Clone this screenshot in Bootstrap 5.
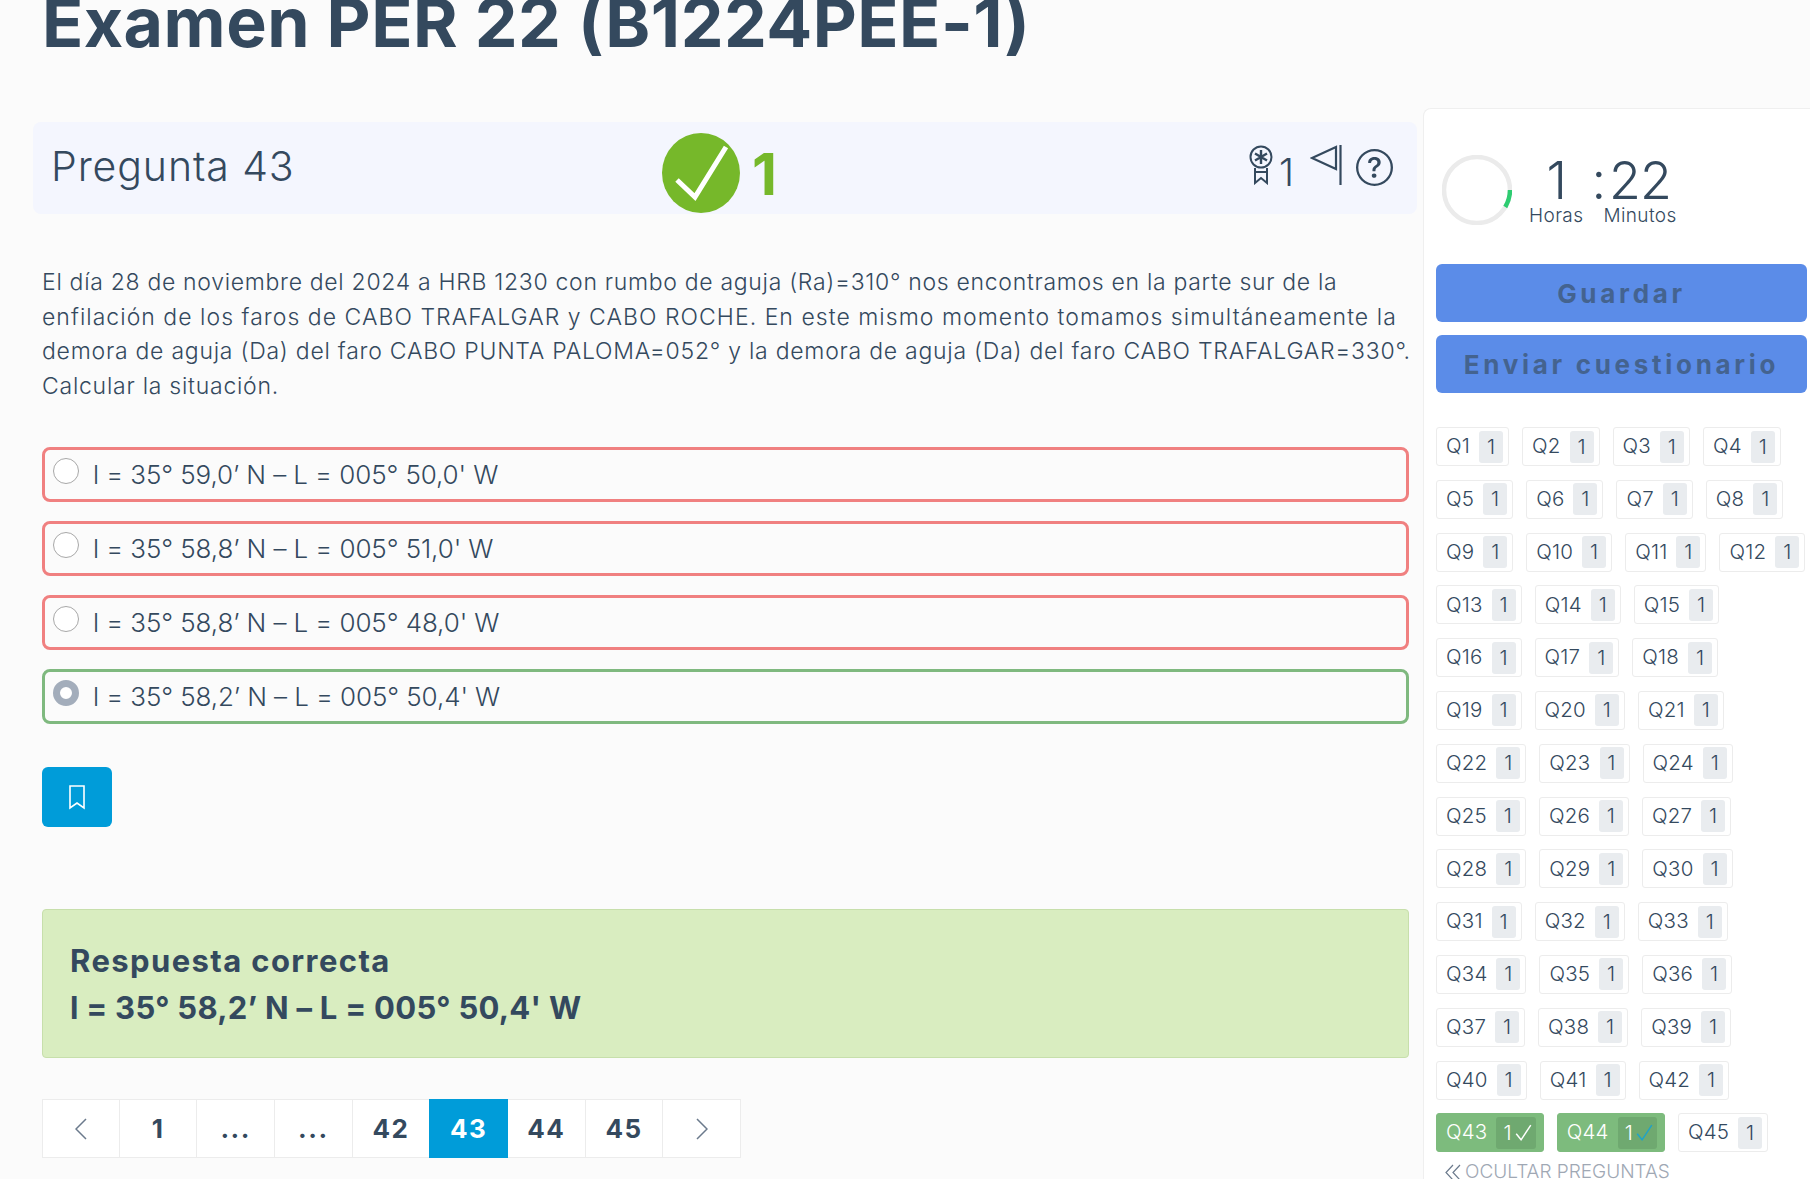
<!DOCTYPE html>
<html lang="es">
<head>
<meta charset="utf-8">
<title>Examen PER 22</title>
<link href="https://cdn.jsdelivr.net/npm/bootstrap@5.3.0/dist/css/bootstrap.min.css" rel="stylesheet">
<style>
html,body{height:1179px;overflow:hidden;background:#fbfbfb}
body{font-family:Inter,"Liberation Sans",sans-serif;color:#34495e;font-weight:300}
.exam-title{font-size:68px;line-height:64px;font-weight:700;color:#34495e;margin:-10px 0 0 42px;height:118px;white-space:nowrap;letter-spacing:.5px}
.main-col{flex:0 0 1423px;width:1423px;padding:14px 6px 0 33px}
.q-head{height:92px;background:#f4f6fe;border-radius:8px;padding-left:18px}
.q-head-title{flex:0 0 611px;font-size:41px;color:#34495e;padding-bottom:3px;letter-spacing:.9px}
.score-check{margin-top:10px}
.score-num{font-size:58px;font-weight:700;color:#76b82a;line-height:1;margin-left:12px;padding-top:12px}
.head-icons{padding-right:24px;color:#34495e;padding-top:0}
.head-num{font-size:38px;line-height:1;margin:8px 16px 0 6px}
.head-help{margin:4px 0 0 14px}
.q-body{padding:0 8px 0 9px}
.q-text{font-size:23px;line-height:34.6px;margin:51px 0 44px;letter-spacing:.75px;white-space:nowrap}
.q-line1{letter-spacing:.69px}
.q-line2{letter-spacing:1.03px}
.opt{height:55px;border:3px solid #f08080;border-radius:8px;margin-bottom:19px;padding:8px 0 0 8px;font-size:26px;line-height:36px;gap:14px;letter-spacing:-.1px;background:transparent;white-space:nowrap}
.opt.opt-ok{border-color:#7fb97f}
.opt .form-check-input{width:26px;height:26px;margin:0;flex:none;background-color:#fff;border:1px solid #a8a8a8}
.opt .form-check-input:checked{background-color:#fff;background-image:none;border:7px solid #a3adbb}
.opt-label{margin-top:-1px}
.btn.mark-btn{width:70px;height:60px;background:#009cd9;border:0;border-radius:6px;margin-top:43px;padding:0;color:#fff}
.alert.ans{background:#d9edc0;border:1px solid #c7dfab;color:#34495e;border-radius:4px;margin:82px 0 0;height:149px;padding:27px 27px;font-size:31px;line-height:47px;font-weight:700;white-space:nowrap;letter-spacing:.25px}
.ans-head{letter-spacing:1.4px}
.pagination.pager{margin:41px 0 0;width:699px;height:59px}
.pager .page-item{width:77.7px}
.pager .page-link{height:59px;padding:0;display:flex;align-items:center;justify-content:center;background:#fff;border:1px solid #ececec;color:#34495e;font-size:26px;font-weight:700;border-radius:0!important;letter-spacing:1.5px}
.pager .page-item.active .page-link{background:#009cd9;border-color:#009cd9;color:#fff}
.side-col{flex:1 1 auto;background:#fff;border:1px solid #efefef;border-right:0;border-radius:8px 0 0 0;margin-top:0;padding:46px 0 0 12px;height:1100px;overflow:hidden}
.timer-ring{flex:none;margin:0 0 0 6px}
.timer-cols{margin-left:17px;gap:20px}
.t-num{font-size:52px;line-height:51px;height:51px;font-weight:300;text-align:center;letter-spacing:-1px}
.t-num-min{text-align:left;margin-left:-12px}
.t-colon{margin-right:4px}
.t-lab{font-size:19px;line-height:20px;text-align:center;letter-spacing:.4px}
.btn.act-btn{display:block;width:371px;height:58px;background:#5b8ce8;border:0;border-radius:6px;color:#44638f;font-size:26px;font-weight:700;letter-spacing:3.7px;padding:0;white-space:nowrap}
.side-actions{margin:38px 0 34px;gap:13px;display:flex;flex-direction:column}
.q-grid{display:flex;flex-wrap:wrap;column-gap:13px;row-gap:13.8px;width:374px}
.qbtn{height:39px;display:inline-flex;align-items:center;gap:9px;padding:0 5px 0 9px;background:#fff;border:1px solid #ececec;border-radius:3px;font-size:20.5px;color:#34495e;font-weight:300;letter-spacing:.2px;white-space:nowrap}
.qbtn .qnum{display:block;min-width:24px;height:32px;line-height:32px;text-align:center;background:#e9ecef;border-radius:3px;padding:0 4px}
.qbtn.qdone{background:#7dbb7d;border-color:#7dbb7d;color:#fff;gap:9px;padding-right:7px}
.qbtn.qdone .qnum{background:#6fa970;padding:0 4px 0 7px;display:flex;align-items:center;gap:3px}
.hide-q{margin:8px 0 0 9px;font-size:19px;color:#a0a8b4;line-height:24px;gap:3px}
</style>
</head>
<body>
<h1 class="exam-title">Examen PER 22 (B1224PEE-1)</h1>
<div class="d-flex">
  <div class="main-col">
    <div class="q-head d-flex align-items-center">
      <div class="q-head-title">Pregunta 43</div>
      <svg class="score-check" width="78" height="80" viewBox="0 0 78 80"><ellipse cx="39" cy="40" rx="39" ry="40" fill="#76b82a"/><path d="M15 47 L33 64 L64 14" fill="none" stroke="#fff" stroke-width="5"/></svg>
      <span class="score-num">1</span>
      <div class="head-icons ms-auto d-flex align-items-start">
        <svg width="24" height="40" viewBox="0 0 24 40" fill="none" stroke="#34495e" stroke-width="2"><circle cx="12" cy="12" r="10.500"/><path d="M12 5v14M6 8.500l12 7M18 8.500l-12 7" stroke-width="2.400"/><path d="M6 23v15l6-5 6 5V23M6 27h12"/></svg>
        <span class="head-num">1</span>
        <svg width="32" height="40" viewBox="0 0 32 40" fill="none" stroke="#34495e" stroke-width="2.200"><path d="M30.500 0v40"/><path d="M26 2 2 13l24 11z"/></svg>
        <svg class="head-help" width="37" height="37" viewBox="0 0 16 16" fill="#34495e"><path d="M8 15A7 7 0 1 1 8 1a7 7 0 0 1 0 14zm0 1A8 8 0 1 0 8 0a8 8 0 0 0 0 16z"/><path d="M5.255 5.786a.237.237 0 0 0 .241.247h.825c.138 0 .248-.113.266-.25.09-.656.54-1.134 1.342-1.134.686 0 1.314.343 1.314 1.168 0 .635-.374.927-.965 1.371-.673.489-1.206 1.06-1.168 1.987l.003.217a.25.25 0 0 0 .25.246h.811a.25.25 0 0 0 .25-.25v-.105c0-.718.273-.927 1.01-1.486.609-.463 1.244-.977 1.244-2.056 0-1.511-1.276-2.241-2.673-2.241-1.267 0-2.655.59-2.75 2.286zm1.557 5.763c0 .533.425.927 1.01.927.609 0 1.028-.394 1.028-.927 0-.552-.42-.94-1.029-.94-.584 0-1.009.388-1.009.94z"/></svg>
      </div>
    </div>
    <div class="q-body">
      <p class="q-text"><span class="q-line1">El día 28 de noviembre del 2024 a HRB 1230 con rumbo de aguja (Ra)=310° nos encontramos en la parte sur de la</span><br><span class="q-line2">enfilación de los faros de CABO TRAFALGAR y CABO ROCHE. En este mismo momento tomamos simultáneamente la</span><br>demora de aguja (Da) del faro CABO PUNTA PALOMA=052° y la demora de aguja (Da) del faro CABO TRAFALGAR=330°.<br>Calcular la situación.</p>
      <div class="opt d-flex align-items-start"><input class="form-check-input" type="radio" name="o"><span class="opt-label">l = 35° 59,0’ N – L = 005° 50,0' W</span></div>
      <div class="opt d-flex align-items-start"><input class="form-check-input" type="radio" name="o"><span class="opt-label">l = 35° 58,8’ N – L = 005° 51,0' W</span></div>
      <div class="opt d-flex align-items-start"><input class="form-check-input" type="radio" name="o"><span class="opt-label">l = 35° 58,8’ N – L = 005° 48,0' W</span></div>
      <div class="opt opt-ok d-flex align-items-start"><input class="form-check-input" type="radio" name="o" checked><span class="opt-label">l = 35° 58,2’ N – L = 005° 50,4' W</span></div>
      <button class="btn mark-btn d-flex align-items-center justify-content-center" type="button" aria-label="Marcar"><svg width="16" height="25" viewBox="0 0 16 25" fill="none" stroke="#fff" stroke-width="1.600"><path d="M1 1h14v22l-7-5-7 5z"/></svg></button>
      <div class="alert ans" role="alert"><span class="ans-head">Respuesta correcta</span><br>l = 35° 58,2’ N – L = 005° 50,4' W</div>
      <ul class="pagination pager">
        <li class="page-item"><a class="page-link" href="#" aria-label="Anterior"><svg width="12" height="22" viewBox="0 0 12 22" fill="none" stroke="#6b7a8c" stroke-width="1.500"><path d="M11 1 1 11l10 10"/></svg></a></li>
        <li class="page-item"><a class="page-link" href="#">1</a></li>
        <li class="page-item"><a class="page-link" href="#">...</a></li>
        <li class="page-item"><a class="page-link" href="#">...</a></li>
        <li class="page-item"><a class="page-link" href="#">42</a></li>
        <li class="page-item active"><a class="page-link" href="#">43</a></li>
        <li class="page-item"><a class="page-link" href="#">44</a></li>
        <li class="page-item"><a class="page-link" href="#">45</a></li>
        <li class="page-item"><a class="page-link" href="#" aria-label="Siguiente"><svg width="12" height="22" viewBox="0 0 12 22" fill="none" stroke="#6b7a8c" stroke-width="1.500"><path d="m1 1 10 10L1 21"/></svg></a></li>
      </ul>
    </div>
  </div>
  <aside class="side-col">
    <div class="d-flex">
      <svg class="timer-ring" width="70" height="70" viewBox="0 0 70 70" fill="none"><circle cx="35" cy="35" r="33" stroke="#ebebeb" stroke-width="4.500"/><path d="M68 35a33 33 0 0 1-4.700 17" stroke="#2ecc71" stroke-width="4.500"/></svg>
      <div class="timer-cols d-flex">
        <div class="timer-unit"><div class="t-num">1</div><div class="t-lab">Horas</div></div>
        <div class="timer-unit"><div class="t-num t-num-min"><span class="t-colon">:</span>22</div><div class="t-lab">Minutos</div></div>
      </div>
    </div>
    <div class="side-actions">
      <button class="btn act-btn" type="button">Guardar</button>
      <button class="btn act-btn" type="button">Enviar cuestionario</button>
    </div>
    <div class="q-grid">
      <span class="qbtn">Q1<span class="qnum">1</span></span>
      <span class="qbtn">Q2<span class="qnum">1</span></span>
      <span class="qbtn">Q3<span class="qnum">1</span></span>
      <span class="qbtn">Q4<span class="qnum">1</span></span>
      <span class="qbtn">Q5<span class="qnum">1</span></span>
      <span class="qbtn">Q6<span class="qnum">1</span></span>
      <span class="qbtn">Q7<span class="qnum">1</span></span>
      <span class="qbtn">Q8<span class="qnum">1</span></span>
      <span class="qbtn">Q9<span class="qnum">1</span></span>
      <span class="qbtn">Q10<span class="qnum">1</span></span>
      <span class="qbtn">Q11<span class="qnum">1</span></span>
      <span class="qbtn">Q12<span class="qnum">1</span></span>
      <span class="qbtn">Q13<span class="qnum">1</span></span>
      <span class="qbtn">Q14<span class="qnum">1</span></span>
      <span class="qbtn">Q15<span class="qnum">1</span></span>
      <span class="qbtn">Q16<span class="qnum">1</span></span>
      <span class="qbtn">Q17<span class="qnum">1</span></span>
      <span class="qbtn">Q18<span class="qnum">1</span></span>
      <span class="qbtn">Q19<span class="qnum">1</span></span>
      <span class="qbtn">Q20<span class="qnum">1</span></span>
      <span class="qbtn">Q21<span class="qnum">1</span></span>
      <span class="qbtn">Q22<span class="qnum">1</span></span>
      <span class="qbtn">Q23<span class="qnum">1</span></span>
      <span class="qbtn">Q24<span class="qnum">1</span></span>
      <span class="qbtn">Q25<span class="qnum">1</span></span>
      <span class="qbtn">Q26<span class="qnum">1</span></span>
      <span class="qbtn">Q27<span class="qnum">1</span></span>
      <span class="qbtn">Q28<span class="qnum">1</span></span>
      <span class="qbtn">Q29<span class="qnum">1</span></span>
      <span class="qbtn">Q30<span class="qnum">1</span></span>
      <span class="qbtn">Q31<span class="qnum">1</span></span>
      <span class="qbtn">Q32<span class="qnum">1</span></span>
      <span class="qbtn">Q33<span class="qnum">1</span></span>
      <span class="qbtn">Q34<span class="qnum">1</span></span>
      <span class="qbtn">Q35<span class="qnum">1</span></span>
      <span class="qbtn">Q36<span class="qnum">1</span></span>
      <span class="qbtn">Q37<span class="qnum">1</span></span>
      <span class="qbtn">Q38<span class="qnum">1</span></span>
      <span class="qbtn">Q39<span class="qnum">1</span></span>
      <span class="qbtn">Q40<span class="qnum">1</span></span>
      <span class="qbtn">Q41<span class="qnum">1</span></span>
      <span class="qbtn">Q42<span class="qnum">1</span></span>
      <span class="qbtn qdone">Q43<span class="qnum">1<svg width="17" height="17" viewBox="0 0 14 14" fill="none" stroke="#fff" stroke-width="1.200"><path d="m1 8 4 5 8-12"/></svg></span></span>
      <span class="qbtn qdone">Q44<span class="qnum">1<svg width="17" height="17" viewBox="0 0 14 14" fill="none" stroke="#1fa3c9" stroke-width="1.200"><path d="m1 8 4 5 8-12"/></svg></span></span>
      <span class="qbtn">Q45<span class="qnum">1</span></span>
    </div>
    <div class="hide-q d-flex align-items-center"><svg width="17" height="17" viewBox="0 0 17 17" fill="none" stroke="#6b7a8c" stroke-width="1.200"><path d="M8 1 1 8.500l7 7.500M15 1 8 8.500l7 7.500"/></svg>OCULTAR PREGUNTAS</div>
  </aside>
</div>
<script src="https://cdn.jsdelivr.net/npm/bootstrap@5.3.0/dist/js/bootstrap.bundle.min.js"></script>
</body>
</html>
